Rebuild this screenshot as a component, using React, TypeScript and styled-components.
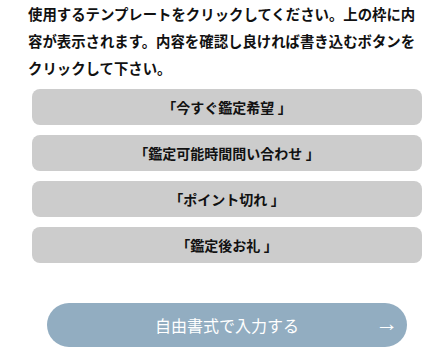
import styled, { createGlobalStyle } from "styled-components";

const GlobalStyle = createGlobalStyle`
  body {
    margin: 0;
    background: #ffffff;
    font-family: "Liberation Serif", "Noto Sans CJK JP", serif;
  }
`;

const templates = [
  "「今すぐ鑑定希望 」",
  "「鑑定可能時間問い合わせ 」",
  "「ポイント切れ 」",
  "「鑑定後お礼 」",
];

export default function App() {
  return (
    <>
      <GlobalStyle />
      <Page>
        <Intro>
          使用するテンプレートをクリックしてください。上の枠に内容が表示されます。内容を確認し良ければ書き込むボタンをクリックして下さい。
        </Intro>
        <TemplateList>
          {templates.map((t) => (
            <TemplateButton key={t}>{t}</TemplateButton>
          ))}
        </TemplateList>
        <FreeButton>
          <span>自由書式で入力する</span>
          <Arrow>→</Arrow>
        </FreeButton>
      </Page>
    </>
  );
}

const Page = styled.div`
  width: 443px;
  height: 352px;
  padding: 2px 0 0 28px;
  box-sizing: border-box;
  overflow: hidden;
`;

const Intro = styled.p`
  width: 392px;
  margin: 0 0 6px 0;
  font-size: 14.4px;
  line-height: 27px;
  font-weight: 700;
  color: #111;
`;

const TemplateList = styled.div`
  display: flex;
  flex-direction: column;
  gap: 10.5px;
  margin-left: 4px;
  width: 390px;
`;

const TemplateButton = styled.button`
  height: 35.5px;
  border: none;
  border-radius: 8px;
  background: #cccccc;
  color: #111;
  font-family: inherit;
  font-size: 14px;
  font-weight: 700;
  cursor: pointer;
  padding: 0;
`;

const FreeButton = styled.button`
  position: relative;
  margin: 40px 0 0 19px;
  width: 360px;
  height: 44px;
  border: none;
  border-radius: 22px;
  background: #92adc1;
  color: #fff;
  font-family: inherit;
  font-size: 16px;
  display: flex;
  align-items: center;
  justify-content: center;
  cursor: pointer;
`;

const Arrow = styled.span`
  position: absolute;
  right: 9px;
  top: 50%;
  transform: translateY(-54%);
  font-size: 23px;
  font-weight: 300;
`;
